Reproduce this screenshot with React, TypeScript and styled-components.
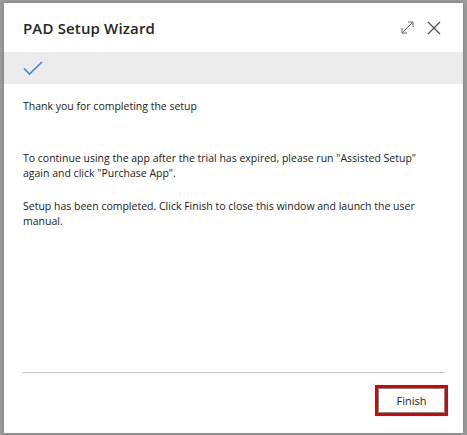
import styled, { createGlobalStyle } from "styled-components";

const GlobalStyle = createGlobalStyle`
  html, body {
    margin: 0;
    padding: 0;
    background: #9c9c9c;
  }

  body {
    font-family: "Open Sans", "Liberation Sans", sans-serif;
    color: #212121;
  }
`;

const Backdrop = styled.div`
  box-sizing: border-box;
  width: 467px;
  height: 435px;
  padding: 3px 4px 2px 4px;
  background: #9c9c9c;
`;

const Dialog = styled.div`
  display: flex;
  flex-direction: column;
  height: 100%;
  background: #ffffff;
  box-shadow: 0 0 4px rgba(0, 0, 0, 0.25);
`;

const Header = styled.header`
  display: flex;
  align-items: center;
  justify-content: space-between;
  height: 49px;
  padding: 0 22px 0 19px;
`;

const Title = styled.h1`
  margin: 0;
  font-size: 15px;
  font-weight: 600;
  color: #262626;
  letter-spacing: 0.15px;
`;

const Actions = styled.div`
  display: flex;
  align-items: center;
  gap: 13px;
`;

const IconButton = styled.button`
  display: flex;
  align-items: center;
  justify-content: center;
  padding: 0;
  background: none;
  border: none;
  color: #505050;
`;

const StepBar = styled.div`
  display: flex;
  align-items: center;
  height: 32px;
  padding: 0 19px;
  background: #ebebeb;
`;

const Content = styled.section`
  flex: 1;
  padding: 15px 19px 0;
  font-size: 10.5px;
  line-height: 15px;
`;

const Paragraph = styled.p<{ $gap?: number }>`
  margin: 0 0 ${(props) => props.$gap ?? 18}px;
`;

const Footer = styled.footer`
  display: flex;
  justify-content: flex-end;
  margin: 0 18px 0 19px;
  padding: 15px 0 20px;
  border-top: 1px solid #c8c8c8;
`;

const Button = styled.button`
  box-sizing: border-box;
  width: 67px;
  height: 25px;
  font-family: "Open Sans", "Liberation Sans", sans-serif;
  font-size: 11px;
  color: #212121;
  background: #ffffff;
  border: 1px solid #8a8886;
  outline: 3px solid #e00000;
  outline-offset: 0;
`;

const CheckIcon = () => (
  <svg width="20" height="14" viewBox="0 0 20 14" fill="none">
    <path d="M1 7.5 L6.5 13 L19 1" stroke="#3a85d8" strokeWidth="1.6" />
  </svg>
);

const ExpandIcon = () => (
  <svg width="13" height="13" viewBox="0 0 13 13" fill="none" stroke="#666" strokeWidth="1">
    <path d="M1 12 L12 1" />
    <path d="M7 1 H12 V6" />
    <path d="M1 7 V12 H6" />
  </svg>
);

const CloseIcon = () => (
  <svg width="14" height="14" viewBox="0 0 14 14" fill="none" stroke="#505050" strokeWidth="1.2">
    <path d="M1 1 L13 13" />
    <path d="M13 1 L1 13" />
  </svg>
);

export default function App() {
  return (
    <>
      <GlobalStyle />
      <Backdrop>
        <Dialog role="dialog">
          <Header>
            <Title>PAD Setup Wizard</Title>
            <Actions>
              <IconButton aria-label="Expand">
                <ExpandIcon />
              </IconButton>
              <IconButton aria-label="Close">
                <CloseIcon />
              </IconButton>
            </Actions>
          </Header>
          <StepBar>
            <CheckIcon />
          </StepBar>
          <Content>
            <Paragraph $gap={37}>Thank you for completing the setup</Paragraph>
            <Paragraph>
              To continue using the app after the trial has expired, please run "Assisted Setup"
              again and click "Purchase App".
            </Paragraph>
            <Paragraph>
              Setup has been completed. Click Finish to close this window and launch the user
              manual.
            </Paragraph>
          </Content>
          <Footer>
            <Button>Finish</Button>
          </Footer>
        </Dialog>
      </Backdrop>
    </>
  );
}
